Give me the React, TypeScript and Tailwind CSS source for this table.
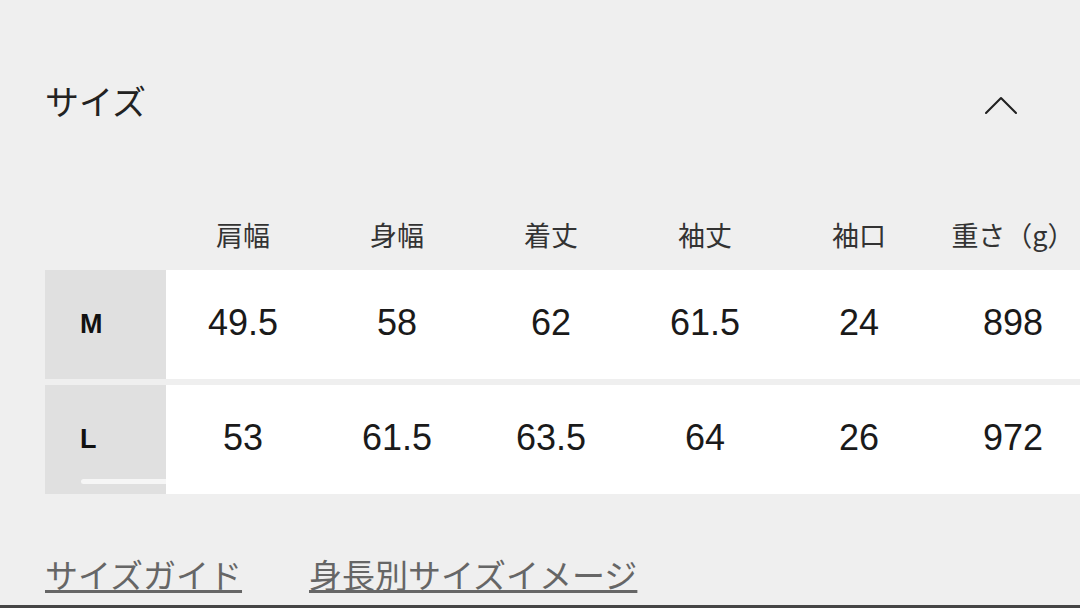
import React from 'react';

const JP = '"Noto Sans CJK JP", "Noto Sans", sans-serif';
const NUM = '"Liberation Sans", "Noto Sans CJK JP", sans-serif';

const columns = ['肩幅', '身幅', '着丈', '袖丈', '袖口', '重さ（g）'];

const rows: { size: string; values: string[] }[] = [
  { size: 'M', values: ['49.5', '58', '62', '61.5', '24', '898'] },
  { size: 'L', values: ['53', '61.5', '63.5', '64', '26', '972'] },
];

const ChevronUp = () => (
  <svg width="34" height="20" viewBox="0 0 34 20" fill="none">
    <path d="M2 17 17 2l15 15" stroke="#222" strokeWidth="2.1" strokeLinecap="round" strokeLinejoin="round" />
  </svg>
);

export default function App() {
  return (
    <div
      className="relative flex h-[608px] w-[1080px] flex-col overflow-hidden bg-[#efefef] text-[#222]"
      style={{ fontFamily: JP }}
    >
      {/* section header */}
      <div className="mt-[77px] flex h-[48px] items-center justify-between pl-[45px] pr-[62px]">
        <h2 className="text-[34px] font-normal leading-[48px] text-[#222]">サイズ</h2>
        <div className="pt-[9px]">
          <ChevronUp />
        </div>
      </div>

      {/* size table */}
      <div className="relative ml-[45px] mt-[87px] w-[1045px]">
        <div className="flex h-[58px] items-center pb-[12px]">
          <div className="w-[121px] shrink-0" />
          {columns.map((c) => (
            <div key={c} className="w-[154px] shrink-0 text-center text-[27px] leading-[34px] text-[#333]">
              {c}
            </div>
          ))}
        </div>

        <div className="flex flex-col gap-[6px]">
          {rows.map((r) => (
            <div key={r.size} className="flex h-[109px] items-center bg-white">
              <div
                className="flex h-full w-[121px] shrink-0 items-center bg-[#e0e0e0] pl-[35px] text-[27px] font-bold text-[#111]"
                style={{ fontFamily: NUM }}
              >
                {r.size}
              </div>
              {r.values.map((v, i) => (
                <div
                  key={i}
                  className="w-[154px] shrink-0 pb-[3px] text-center text-[36px] leading-[40px] text-[#1a1a1a]"
                  style={{ fontFamily: NUM }}
                >
                  {v}
                </div>
              ))}
            </div>
          ))}
        </div>

        {/* horizontal scroll indicator */}
        <div className="absolute bottom-[10px] left-[36px] h-[5px] w-[700px] rounded-full bg-white/70" />
      </div>

      {/* links */}
      <div className="mt-[60px] flex items-center gap-[67px] pl-[45px] text-[33px] leading-[40px] text-[#666]">
        <a className="underline decoration-[3px] underline-offset-[2px]">サイズガイド</a>
        <a className="underline decoration-[3px] underline-offset-[2px]">身長別サイズイメージ</a>
      </div>

      <div className="mt-auto h-[3px] w-full bg-[#454545]" />
    </div>
  );
}
